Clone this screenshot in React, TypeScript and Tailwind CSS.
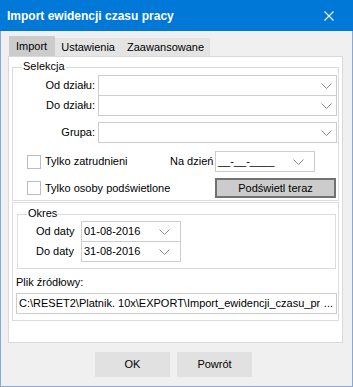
import React from "react";

function Chevron() {
  return (
    <svg width="11" height="6" viewBox="0 0 11 6" className="shrink-0">
      <polyline points="0.5,0.5 5.5,5.5 10.5,0.5" fill="none" stroke="#8c8c8c" strokeWidth="1" />
    </svg>
  );
}

type ComboProps = {
  value?: string;
  className?: string;
  wide?: boolean;
};

function Combo({ value, className = "", wide = false }: ComboProps) {
  return (
    <div
      className={`flex h-[21px] items-center border border-[#cdcdcd] bg-white pl-[2px] ${
        wide ? "pr-[4px]" : "pr-[10px]"
      } ${className}`}
    >
      <span className="flex-1 whitespace-nowrap leading-[13px]">{value}</span>
      <Chevron />
    </div>
  );
}

function Checkbox({ label }: { label: string }) {
  return (
    <div className="flex items-center">
      <div className="ml-[14px] h-[14px] w-[14px] border border-[#bdbdbd] bg-white" />
      <span className="ml-[4px] leading-[13px]">{label}</span>
    </div>
  );
}

function Legend({ children }: { children: React.ReactNode }) {
  return (
    <span className="absolute left-[9px] top-[-8px] bg-white px-[1px] leading-[13px]">{children}</span>
  );
}

export default function App() {
  return (
    <div className="flex h-[387px] w-[353px] flex-col overflow-hidden bg-[#f0f0f0] font-['Liberation_Sans',Arial,sans-serif] text-[11px] text-black">
      <div className="flex h-[31px] shrink-0 items-center bg-[#0078d7] pl-[7px] pr-[19px] text-white">
        <span className="text-[12px] font-bold leading-[14px]">Import ewidencji czasu pracy</span>
        <svg width="10" height="10" viewBox="0 0 10 10" className="ml-auto">
          <path d="M0.5 0.5 L9.5 9.5 M9.5 0.5 L0.5 9.5" stroke="#fff" strokeWidth="1.1" />
        </svg>
      </div>

      <div className="flex flex-1 flex-col border-x border-b border-[#85a9db]">
        <div className="ml-[8px] mt-[5px] flex h-[20px] items-end">
          <div className="flex h-[20px] items-center bg-[#cccccc] pl-[7px] pr-[8px] leading-[13px]">Import</div>
          <div className="flex h-[18px] items-center bg-[#e4e4e4] px-[6px] leading-[13px]">Ustawienia</div>
          <div className="flex h-[18px] items-center bg-[#e4e4e4] px-[6px] leading-[13px]">Zaawansowane</div>
        </div>

        <div className="ml-[7px] h-[287px] w-[335px] border border-[#d9d9d9] bg-white">
          <div className="relative mx-[3px] mt-[10px] border border-[#dcdcdc] pb-[2px] pt-[7px]">
            <Legend>Selekcja</Legend>
            <div className="flex items-center">
              <span className="w-[82px] text-right leading-[13px]">Od działu:</span>
              <Combo wide className="ml-[3px] mr-[1px] flex-1" />
            </div>
            <div className="-mt-px flex items-center">
              <span className="w-[82px] text-right leading-[13px]">Do działu:</span>
              <Combo wide className="ml-[3px] mr-[1px] flex-1" />
            </div>
            <div className="mt-[6px] flex items-center">
              <span className="w-[82px] text-right leading-[13px]">Grupa:</span>
              <Combo wide className="ml-[3px] mr-[1px] flex-1" />
            </div>
            <div className="mt-[8px] flex h-[21px] items-center">
              <div className="w-[157px]">
                <Checkbox label="Tylko zatrudnieni" />
              </div>
              <span className="w-[45px] leading-[13px]">Na dzień</span>
              <Combo value="__-__-____" className="w-[100px]" />
            </div>
            <div className="mt-[6px] flex h-[20px] items-center">
              <div className="w-[202px]">
                <Checkbox label="Tylko osoby podświetlone" />
              </div>
              <button
                type="button"
                className="flex h-[20px] w-[121px] items-center justify-center border-2 border-[#727272] bg-[#cccccc] leading-[13px]"
              >
                Podświetl teraz
              </button>
            </div>
          </div>

          <div className="mx-[3px] mt-px border border-[#dcdcdc] pb-[6px]">
            <div className="relative ml-[4px] mr-[2px] mt-[11px] border border-[#dcdcdc] pb-[6px] pl-[18px] pt-[6px]">
              <Legend>Okres</Legend>
              <div className="flex items-center">
                <span className="w-[45px] leading-[13px]">Od daty</span>
                <Combo value="01-08-2016" className="w-[100px]" />
              </div>
              <div className="-mt-px flex items-center">
                <span className="w-[45px] leading-[13px]">Do daty</span>
                <Combo value="31-08-2016" className="w-[100px]" />
              </div>
            </div>
            <div className="ml-[3px] mt-[7px] leading-[13px]">Plik źródłowy:</div>
            <div className="ml-[3px] mr-[1px] mt-[4px] flex h-[21px] items-center border border-[#cdcdcd] bg-white pl-[2px] pr-[3px]">
              <span className="flex-1 overflow-hidden whitespace-nowrap leading-[13px]">
                C:\RESET2\Platnik. 10x\EXPORT\Import_ewidencji_czasu_pracy.txt
              </span>
              <span className="ml-[4px] leading-[13px]">...</span>
            </div>
          </div>
        </div>

        <div className="ml-[94px] mt-[9px] flex gap-[7px]">
          <button type="button" className="h-[25px] w-[75px] bg-[#e1e1e1] leading-[13px]">
            OK
          </button>
          <button type="button" className="h-[25px] w-[75px] bg-[#e1e1e1] leading-[13px]">
            Powrót
          </button>
        </div>
      </div>
    </div>
  );
}
